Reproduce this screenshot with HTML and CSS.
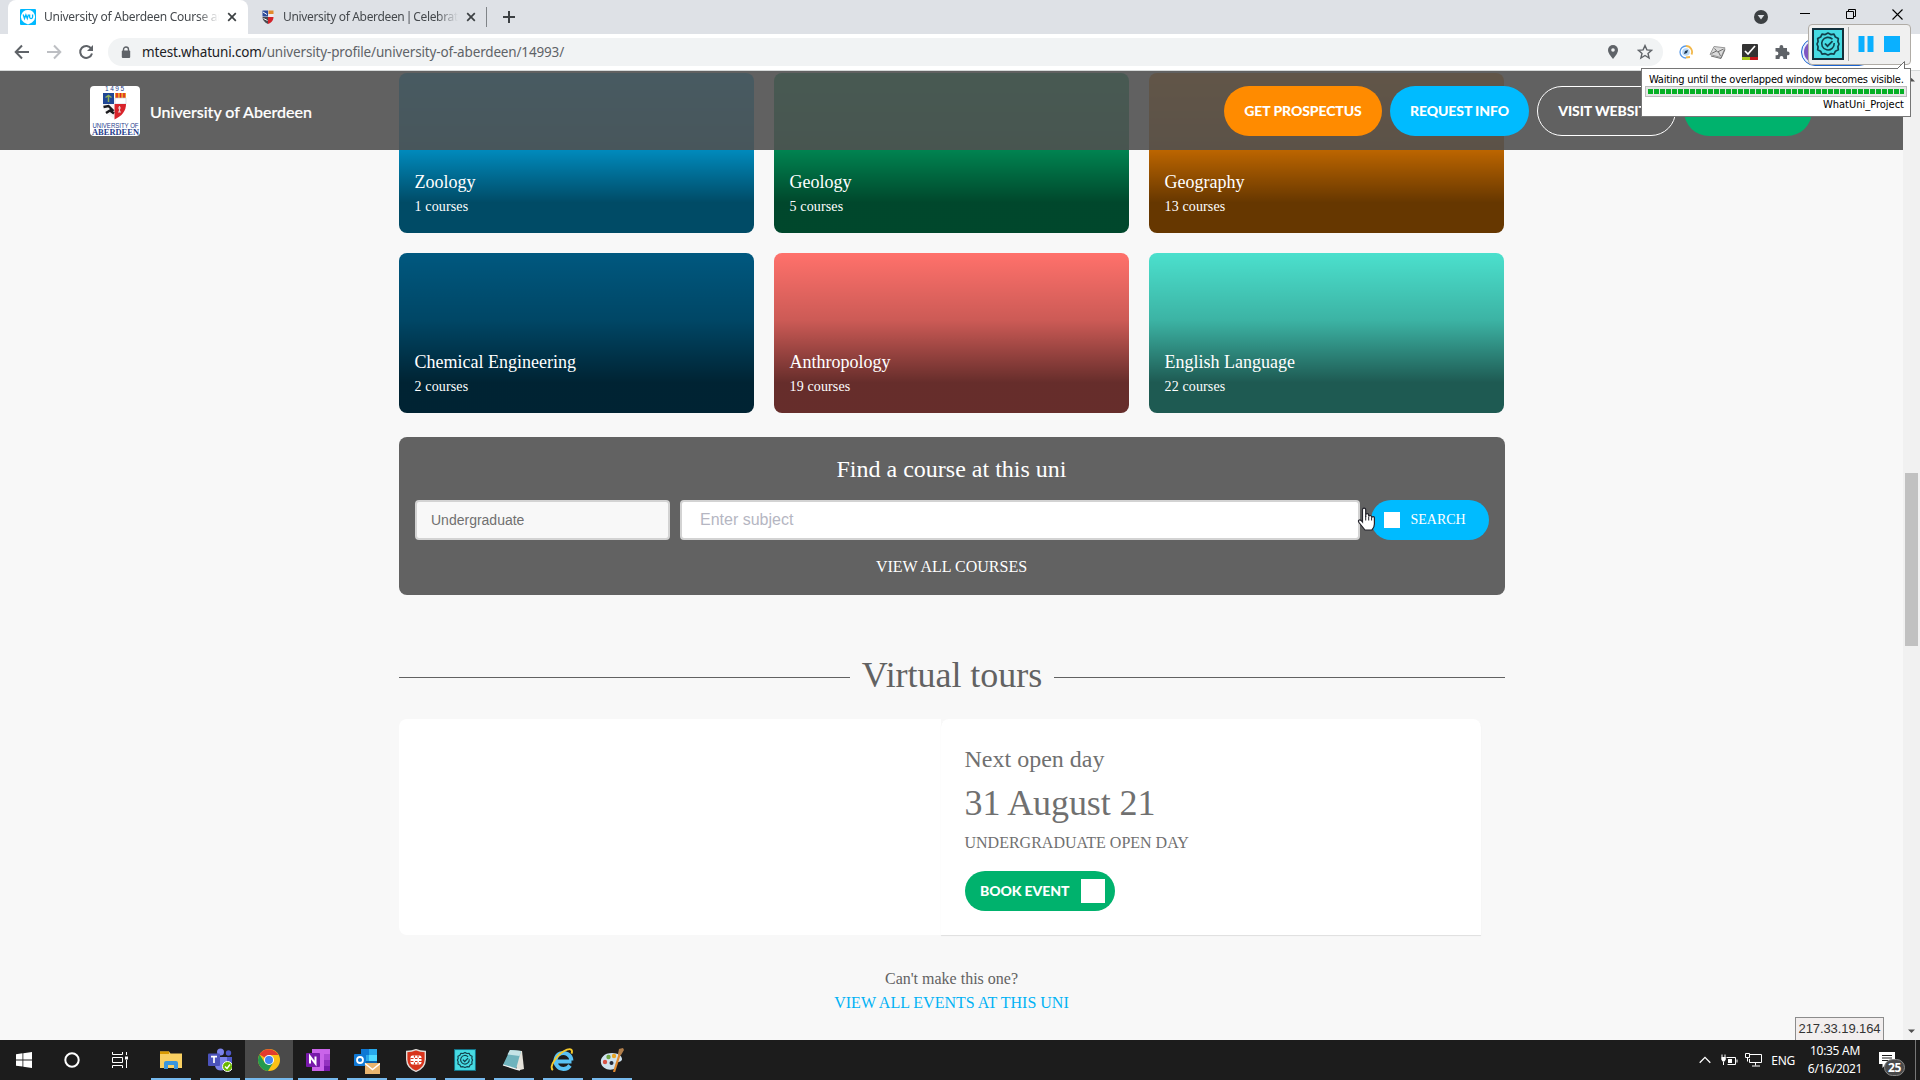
FILE: index.html
```html
<!DOCTYPE html>
<html lang="en">
<head>
<meta charset="utf-8">
<title>University of Aberdeen Course</title>
<link rel="stylesheet" href="styles.css">
</head>
<body>
<div class="desktop">
  <div class="tabstrip">
    <div class="tab tab-active">
      <svg class="favicon" width="16" height="16" viewBox="0 0 16 16"><rect width="16" height="16" rx="1" fill="#00b9ff"/><path d="M8 .9a6.9 6.9 0 0 1 4 12.600L8 15.500l-4-2A6.900 6.900 0 0 1 8 .9z" fill="#fff"/><path d="M3.200 5.500l1.300 4 1.400-3.600 1.400 3.600 1.200-4M9.600 5.500v2.600q0 1.500 1.500 1.500t1.500-1.500V5.500" fill="none" stroke="#00b9ff" stroke-width="1.300"/></svg>
      <span class="tab-title">University of Aberdeen Course and</span>
      <svg class="close" width="10" height="10" viewBox="0 0 10 10"><path d="M1.200 1.200l7.600 7.600M8.800 1.200l-7.600 7.600" stroke="#3c4043" stroke-width="1.700"/></svg>
    </div>
    <div class="tab">
      <svg class="favicon" width="16" height="16" viewBox="0 0 16 16"><path d="M2.500 1.500h5.500v6H2.500z" fill="#2c4a9a"/><path d="M8.500 1.500h5v3.500h-5z" fill="#e28a2b"/><path d="M8.500 5h5v3h-5z" fill="#f3eaea"/><path d="M2.500 8H8v7C4.500 13.500 2.500 11 2.500 8z" fill="#4a4a50"/><path d="M8 8h5.500C13.500 11.500 11 14 8 15z" fill="#d3232a"/><path d="M3 3l4 2.500M3.500 9.500l4 2" stroke="#fff" stroke-width="1"/></svg>
      <span class="tab-title tight">University of Aberdeen <span class="pipe">|</span> Celebrating</span>
      <svg class="close" width="10" height="10" viewBox="0 0 10 10"><path d="M1.200 1.200l7.600 7.600M8.800 1.200l-7.600 7.600" stroke="#3c4043" stroke-width="1.700"/></svg>
    </div>
    <span class="tab-sep"></span>
    <svg class="newtab" width="14" height="14" viewBox="0 0 14 14"><path d="M7 1v12M1 7h12" stroke="#3c4043" stroke-width="2"/></svg>
    <div class="window-buttons">
      <svg width="14" height="14" viewBox="0 0 14 14"><circle cx="7" cy="7" r="7" fill="#3c4043"/><path d="M3.700 5h6.600L7 9.600z" fill="#dee1e6"/></svg>
      <svg width="10" height="12" viewBox="0 0 10 12"><path d="M0 5.500h10" stroke="#000"/></svg>
      <svg width="10" height="10" viewBox="0 0 10 10"><path d="M.5 2.500h7v7h-7zM2.500 2.500v-2h7v7h-2" fill="none" stroke="#000"/></svg>
      <svg width="11" height="11" viewBox="0 0 11 11"><path d="M.5.5l10 10M10.500.5l-10 10" stroke="#000" stroke-width="1.100"/></svg>
    </div>
  </div>

  <div class="toolbar">
    <svg width="16" height="16" viewBox="0 0 16 16"><path d="M15 8H2M8 1.500L1.700 8 8 14.500" fill="none" stroke="#5f6368" stroke-width="2"/></svg>
    <svg width="16" height="16" viewBox="0 0 16 16"><path d="M1 8h13M8 1.500L14.300 8 8 14.500" fill="none" stroke="#bdbfc3" stroke-width="2"/></svg>
    <svg width="16" height="16" viewBox="0 0 16 16"><path d="M13.300 4.700A6 6 0 1 0 14 9.500" fill="none" stroke="#5f6368" stroke-width="2"/><path d="M15 1v6H9z" fill="#5f6368"/></svg>
    <div class="omnibox">
      <svg width="10" height="13" viewBox="0 0 10 13"><path d="M2.500 5V3.500a2.500 2.500 0 0 1 5 0V5" fill="none" stroke="#5f6368" stroke-width="1.400"/><rect x=".8" y="4.500" width="8.400" height="7.500" rx="1" fill="#5f6368"/></svg>
      <span class="url"><b>mtest.whatuni.com</b>/university-profile/university-of-aberdeen/14993/</span>
      <svg width="12" height="16" viewBox="0 0 12 16"><path d="M6 1a5 5 0 0 1 5 5c0 3.500-5 9-5 9S1 9.500 1 6a5 5 0 0 1 5-5z" fill="#5f6368"/><circle cx="6" cy="6" r="1.800" fill="#f1f3f4"/></svg>
      <svg width="16" height="16" viewBox="0 0 16 16"><path d="M8 1.600l1.900 4.300 4.700.4L11 9.400l1.100 4.600L8 11.500 3.900 14 5 9.400 1.400 6.300l4.700-.4z" fill="none" stroke="#5f6368" stroke-width="1.400"/></svg>
    </div>
    <div class="extensions">
      <svg width="14" height="14" viewBox="0 0 14 14"><path d="M7 1a6 6 0 0 1 5.500 8.500M11 12l-4 .5" fill="none" stroke="#f2b84b" stroke-width="1.800"/><path d="M7 1A6 6 0 0 0 7 13" fill="none" stroke="#5a9be8" stroke-width="1.300"/><circle cx="7" cy="7" r="3.800" fill="#b9d8f5"/><path d="M5 9l1-3 3-1-1 3z" fill="#1c3550"/></svg>
      <svg width="17" height="14" viewBox="0 0 17 14"><path d="M5 1.500l11 1.300-4 9.700L1 9.500z" fill="#dadada" stroke="#999"/><path d="M5.500 3.500l3 3.500 6-3M2.500 8.500l5-2.500M11.500 11L9.500 7M2 11l10 2.500 4-9" fill="none" stroke="#707070"/></svg>
      <svg width="16" height="16" viewBox="0 0 16 16"><rect width="16" height="16" rx="1" fill="#333"/><path d="M0 13h8v3H1a1 1 0 0 1-1-1z" fill="#a6c81c"/><path d="M8 13h8v2a1 1 0 0 1-1 1H8z" fill="#c4161c"/><path d="M3 7l3 3 7-8" fill="none" stroke="#fff" stroke-width="1.700"/></svg>
      <svg width="16" height="16" viewBox="0 0 16 16"><path d="M1.500 4h4V3a1.900 1.900 0 0 1 3.800 0v1h3.700v3.500h.7a1.900 1.900 0 0 1 0 3.800H13V15H9.400v-1a1.900 1.900 0 0 0-3.800 0v1h-4v-3.700h.9a1.900 1.900 0 0 0 0-3.800h-1z" fill="#5f6368"/></svg>
      <span class="profile"><i></i></span>
    </div>
  </div>

  <div class="viewport">
    <main class="page">
      <section class="cards">
        <article class="card c-sky"><h3>Zoology</h3><p>1 courses</p></article>
        <article class="card c-green"><h3>Geology</h3><p>5 courses</p></article>
        <article class="card c-orange"><h3>Geography</h3><p>13 courses</p></article>
        <article class="card c-navy"><h3>Chemical Engineering</h3><p>2 courses</p></article>
        <article class="card c-coral"><h3>Anthropology</h3><p>19 courses</p></article>
        <article class="card c-teal"><h3>English Language</h3><p>22 courses</p></article>
      </section>
      <section class="finder">
        <h2>Find a course at this uni</h2>
        <div class="finder-row">
          <div class="level">Undergraduate</div>
          <div class="subject">Enter subject</div>
          <div class="search"><i></i>SEARCH</div>
        </div>
        <a class="view-courses">VIEW ALL COURSES</a>
      </section>
      <div class="section-title"><span>Virtual tours</span></div>
      <section class="openday">
        <div class="media"></div>
        <div class="event">
          <p class="next">Next open day</p>
          <p class="date">31 August 21</p>
          <p class="kind">UNDERGRADUATE OPEN DAY</p>
          <div class="book"><span>BOOK EVENT</span><i></i></div>
        </div>
      </section>
      <div class="more"><p>Can't make this one?</p><a>VIEW ALL EVENTS AT THIS UNI</a></div>
    </main>
    <div class="scrollbar">
      <svg width="17" height="17" viewBox="0 0 17 17"><path d="M5 10.500h7L8.500 7z" fill="#505050"/></svg>
      <span class="thumb"></span>
      <svg width="17" height="17" viewBox="0 0 17 17"><path d="M5 6.500h7L8.500 10z" fill="#505050"/></svg>
    </div>
    <header class="unibar">
      <div class="crest">
        <svg width="50" height="50" viewBox="0 0 50 50">
          <text x="24.500" y="5" font-size="6.500" textLength="19" class="crest-text">1495</text>
          <g transform="translate(-1 0)"><path d="M14 7h11v11H14z" fill="#1f4795"/><path d="M26 7h11v5H26z" fill="#f0a127"/><path d="M28 7v5M31.500 7v5M35 7v5" stroke="#d8232a" stroke-width="1.500"/><path d="M26 12h11v6H26z" fill="#fff" stroke="#c5cad8" stroke-width=".6"/>
          <path d="M25.500 18H37c0 7-4 12-11.500 15.500z" fill="#d8232a"/><path d="M14 18h11v14.500C17 29 14 24 14 18z" fill="#f4f4f4"/><path d="M14.500 21l5-1 5 5M17 27l4-2.500 4 3" fill="none" stroke="#1a1a1e" stroke-width="2.400"/><path d="M19.500 9v7M16.500 11.500l3-2 3 2" fill="none" stroke="#8fb05a" stroke-width="1.500"/><path d="M30.500 20v6M29 26h3M29 22h3" stroke="#e8c9c9" stroke-width="1.200"/></g>
          <text x="25.500" y="41.500" font-size="7" textLength="46" lengthAdjust="spacingAndGlyphs" class="crest-text">UNIVERSITY OF</text>
          <text x="25.500" y="49" font-size="8.500" font-weight="700" textLength="47" lengthAdjust="spacingAndGlyphs" class="crest-text crest-serif">ABERDEEN</text>
        </svg>
      </div>
      <span class="uniname">University of Aberdeen</span>
      <div class="actions">
        <span class="btn b-orange">GET PROSPECTUS</span>
        <span class="btn b-blue">REQUEST INFO</span>
        <span class="btn b-line">VISIT WEBSITE</span>
        <span class="btn b-green"></span>
      </div>
    </header>
    <div class="ip">217.33.19.164</div>
  </div>

  <div class="taskbar">
    <div class="task"><svg width="16" height="16" viewBox="0 0 16 16"><path d="M0 2.200L6.500 1.300v6.200H0zM7.300 1.200L16 0v7.500H7.300zM0 8.400h6.500v6.200L0 13.700zM7.300 8.400H16V16l-8.700-1.200z" fill="#fff"/></svg></div>
    <div class="task"><svg width="16" height="16" viewBox="0 0 16 16"><circle cx="8" cy="8" r="6.700" fill="none" stroke="#fff" stroke-width="2"/></svg></div>
    <div class="task"><svg width="16" height="16" viewBox="0 0 16 16"><path d="M.5 0v2.500h10V0M.5 5.500h10v5H.5zM.5 16v-2.500h10V16M14.500 0v3M14.500 8v8" fill="none" stroke="#fff"/><path d="M13 4.500h3v3h-3z" fill="#fff"/></svg></div>
    <div class="task open"><svg width="22" height="20" viewBox="0 0 22 20"><path d="M0 1.500h9l1.500 2H22V18H0z" fill="#f9d062"/><path d="M0 1.500h9v2.500H0z" fill="#d99a00"/><path d="M4 19v-6q0-2 2-2h10q2 0 2 2v6h-4v-4H8v4z" fill="#3a96dd"/></svg></div>
    <div class="task open"><svg width="24" height="24" viewBox="0 0 24 24"><circle cx="12.500" cy="4" r="3.500" fill="#7b83eb"/><circle cx="20.500" cy="5" r="2.700" fill="#5059c9"/><path d="M17 9h7v7q-1 3.500-5 3z" fill="#5059c9"/><path d="M7 9h12v8q-1 5.500-6 5.500T7 18z" fill="#7b83eb"/><rect y="5.500" width="12" height="12.500" rx="1" fill="#4b53bc"/><path d="M3 8.700h6M6 8.700V15" stroke="#fff" stroke-width="1.700"/><circle cx="19.500" cy="18.500" r="5" fill="#6bb700" stroke="#fff"/><path d="M17 18.500l2 2 3-4" fill="none" stroke="#fff" stroke-width="1.400"/></svg></div>
    <div class="task open current"><svg width="22" height="22" viewBox="0 0 22 22"><circle cx="11" cy="11" r="11" fill="#fbc116"/><path d="M11 11L1.500 5.500A11 11 0 0 1 20.500 6H11z" fill="#e33b2e"/><path d="M1.500 5.500A11 11 0 0 0 10 22l5.300-8.500L6.700 13.500z" fill="#239a4e"/><circle cx="11" cy="11" r="5" fill="#fff"/><circle cx="11" cy="11" r="4" fill="#4285f4"/></svg></div>
    <div class="task open"><svg width="24" height="22" viewBox="0 0 24 22"><path d="M6 0h18v22H6z" fill="#ca64ea"/><path d="M18 0h6v6h-6z" fill="#ca64ea"/><path d="M18 5h6v6h-6z" fill="#ae4bd5"/><path d="M18 11h6v5.500h-6z" fill="#9332bf"/><path d="M18 16.500h6V22h-6z" fill="#7719aa"/><rect y="4" width="14" height="14" rx="1" fill="#7719aa"/><path d="M4 14.500v-7l5.500 7v-7" fill="none" stroke="#fff" stroke-width="2"/></svg></div>
    <div class="task open"><svg class="low" width="26" height="25" viewBox="0 0 26 25"><path d="M7 0h16v17H7z" fill="#0a64ad"/><path d="M7 0h8v6H7z" fill="#0f78d4"/><path d="M15 0h8v6h-8zM7 6h8v6H7z" fill="#28a8ea"/><path d="M15 6h8v6h-8z" fill="#50d9ff"/><rect y="5" width="12" height="12" rx="1" fill="#0f78d4"/><circle cx="6" cy="11" r="3" fill="none" stroke="#fff" stroke-width="1.800"/><path d="M11 14h15v11H11z" fill="#eab56f"/><path d="M11 14.500l7.500 6 7.500-6" fill="none" stroke="#fff" stroke-width="1.500"/></svg></div>
    <div class="task open"><svg width="20" height="23" viewBox="0 0 20 23"><path d="M.7 2.500Q6 2.500 10 .7q4 1.800 9.300 1.800v8Q19 19 10 22.300 1 19 .7 10.500z" fill="#d8341c" stroke="#e0dcd8" stroke-width="1.400"/><rect x="4.500" y="6.500" width="11" height="9" rx="2" fill="#fff"/><path d="M4.500 9.500h3m1.500 0h2.500m1.500 0h3M4.500 12.500h3m1.500 0h2.500m1.500 0h3M8.500 6.500v2M12 6.500v2M8.500 13.500v2M12 13.500v2" stroke="#d8341c" stroke-width="1.200"/></svg></div>
    <div class="task open"><svg width="22" height="22" viewBox="0 0 32 32"><rect x=".8" y=".8" width="30.400" height="30.400" fill="#47dbe3" stroke="#13758a" stroke-width="1.500"/><use href="#gear"/></svg></div>
    <div class="task open"><svg class="left" width="23" height="22" viewBox="0 0 23 22"><path d="M8 1l12 1 2 18-4 1-3-1z" fill="#e5e2da"/><path d="M8 1l11 1-5 18L1 16z" fill="#6fb3bd"/><path d="M8 1l11 1-1.500 5L5.500 5.500z" fill="#c4e3e6"/><path d="M1 16l13 4 4 1" fill="none" stroke="#f3f3f3" stroke-width="1.300"/></svg></div>
    <div class="task open"><svg class="left" width="24" height="24" viewBox="0 0 24 24"><path d="M6 13.500h15.500M20 17.500a8 8 0 1 1 1.400-5" fill="none" stroke="#59c2f4" stroke-width="4"/><path d="M3 22C-2 19 8 5 17 1.700c4-1.500 6 .3 4.500 4" fill="none" stroke="#f5c92c" stroke-width="1.900"/></svg></div>
    <div class="task open"><svg width="24" height="24" viewBox="0 0 24 24"><path d="M12 5C4 5 0 10 1 15s7 8 13 6c3-1 1-4 3-6s5-1 5-4-4-6-10-6z" fill="#cfe2ee"/><circle cx="5" cy="14" r="2.200" fill="#d85246"/><circle cx="8.500" cy="9" r="2.200" fill="#6ea746"/><circle cx="14" cy="8" r="2.200" fill="#e7a628"/><circle cx="11.500" cy="15" r="2" fill="#252b38"/><path d="M20 5l-6 19" stroke="#e08a2f" stroke-width="2.200"/><path d="M18 6l1-5 4-1 1 2-3 5z" fill="#b07e4b"/></svg></div>
    <div class="tray">
      <svg class="t-up" width="12" height="8" viewBox="0 0 12 8"><path d="M.7 6.700L6 1.400l5.300 5.300" fill="none" stroke="#fff" stroke-width="1.300"/></svg>
      <svg class="t-bat" width="17" height="12" viewBox="0 0 17 12"><path d="M5.500 3.500h9v7h-8M16 5.500v3M2.500 11V7.500M1 .5v2.500M4 .5v2.500" fill="none" stroke="#fff"/><path d="M.3 3h4.500v2.500L3.500 7.500h-2L.3 5.500zM7 5h4v4H7z" fill="#fff"/></svg>
      <svg class="t-net" width="17" height="14" viewBox="0 0 17 14"><path d="M5 1.500h11.500v8h-12V6M10.500 9.500v3M7 13h8" fill="none" stroke="#fff"/><path d="M.5.500h4v4h-4zM2.500 4.500v4" fill="none" stroke="#fff"/></svg>
      <span class="lang">ENG</span>
      <div class="clock"><span>10:35 AM</span><span>6/16/2021</span></div>
      <div class="notify">
        <svg width="16" height="16" viewBox="0 0 16 16"><path d="M0 0h16v12H7l-3.500 4v-4H0z" fill="#fff"/><path d="M3 3.500h10M3 6h10M3 8.500h6" stroke="#1c1c1c"/></svg>
        <span class="count">25</span>
      </div>
      <span class="peek"></span>
    </div>
  </div>

  <div class="runner">
    <svg width="32" height="32" viewBox="0 0 32 32"><rect x="1" y="1" width="30" height="30" fill="#47dbe3" stroke="#12303c" stroke-width="2"/>
      <g id="gear" fill="none" stroke="#12404c"><path d="M16 5l2.800 1.600 3.200-.4 1.400 2.900 2.900 1.500-.4 3.100L27 16l-1.100 2.700.4 3.100-2.900 1.400-1.400 2.900-3.200-.4L16 27l-2.800-1.300-3.200.4-1.400-2.900-2.900-1.400.4-3.100L5 16l1.100-2.300-.4-3.100 2.900-1.500L10 6.200l3.200.4z" stroke-width="1.700" stroke-linejoin="round"/><path d="M20.500 11.300A6.300 6.300 0 1 0 22.200 15" stroke-width="1.600"/><path d="M13 15.500l2.500 2.700 5-5" stroke-width="1.800"/></g>
    </svg>
    <i class="rule"></i>
    <svg class="pause" width="16" height="16" viewBox="0 0 16 16"><path d="M.5 0h6v16h-6zM9.500 0h6v16h-6z" fill="#0ab0ff"/></svg>
    <svg width="16" height="16" viewBox="0 0 16 16"><path d="M0 0h16v16H0z" fill="#0ab0ff"/></svg>
  </div>
  <div class="balloon">
    <svg class="tip" width="9" height="9" viewBox="0 0 9 9"><path d="M0 9V8L7.500.5V9z" fill="#fff"/><path d="M0 8L7.500.5V8" fill="none" stroke="#6e6e6e"/></svg>
    <p>Waiting until the overlapped window becomes visible.</p>
    <div class="bar"><i></i></div>
    <p class="project">WhatUni_Project</p>
  </div>
  <svg class="cursor" width="19" height="25" viewBox="0 0 19 25"><path d="M5.500 15V2.700a1.600 1.600 0 0 1 3.200 0V10V8a1.500 1.500 0 0 1 3 .2V9.500a1.500 1.500 0 0 1 2.900.3v1a1.400 1.400 0 0 1 2.800.5V17q0 3.500-2.500 6H8L2 15.500q-1.200-2 .3-2.500 1.500-.3 3.200 2z" fill="#fff" stroke="#23232b" stroke-width="1.200"/><path d="M8.700 9v4.500M11.700 10v3.500M14.600 11v2.500" stroke="#23232b"/></svg>
</div>
</body>
</html>
```
FILE: styles.css
```css
* { box-sizing: border-box; }
body { margin: 0; overflow: hidden; }
h2, h3, p { margin: 0; font-weight: 400; }
svg { display: block; flex: none; }
.desktop { position: relative; width: 1920px; height: 1080px; display: flex; flex-direction: column; overflow: hidden; font-family: "Liberation Serif", "Times New Roman", serif; }

.tabstrip { height: 34px; flex: none; background: #dee1e6; display: flex; align-items: center; padding-left: 8px; font-family: "Noto Sans", sans-serif; }
.tab { width: 240px; height: 34px; display: flex; align-items: center; padding: 0 11px 0 12px; color: #45494d; }
.tab + .tab { padding-right: 12px; }
.tab-active { background: #fff; border-radius: 8px 8px 0 0; }
.tab-title { flex: 1; margin: 0 8px; padding-bottom: 1px; font-size: 12px; letter-spacing: -.27px; white-space: nowrap; overflow: hidden; -webkit-mask-image: linear-gradient(90deg, #000 88%, transparent); mask-image: linear-gradient(90deg, #000 88%, transparent); }
.tight { letter-spacing: -.34px; margin-left: 7px; }
.pipe { margin: 0 -1.500px; }
.tab-sep { width: 1px; height: 20px; background: #808488; margin-left: -2px; }
.newtab { margin-left: 15px; }
.window-buttons { margin-left: auto; display: flex; align-items: center; gap: 36px; padding: 0 17px 6px 0; }
.window-buttons svg:first-child { position: relative; top: 3px; margin-right: -4px; }

.toolbar { height: 37px; flex: none; background: #fff; border-bottom: 1px solid #d6d9d9; display: flex; align-items: center; padding: 0 14px; gap: 16px; }
.toolbar .omnibox { flex: 1; height: 28px; border-radius: 14px; background: #f1f3f4; display: flex; align-items: center; padding: 0 10px 0 13px; margin-left: -2px; gap: 18px; }
.url { flex: 1; font: 13.500px "Noto Sans", sans-serif; letter-spacing: -.16px; color: #5f6368; margin-left: -7px; }
.url b { font-weight: 400; color: #202124; }
.extensions { width: 227px; display: flex; align-items: center; gap: 16px; margin-left: 0; }
.profile { width: 72px; height: 28px; border: 1px solid #1a63d0; border-radius: 14px; background: #e8f0fe; padding: 2px; margin-left: -5px; }
.profile i { display: block; width: 22px; height: 22px; border-radius: 50%; background: #7e57c2; }

.viewport { position: relative; flex: 1; display: flex; background: #f8f8f8; overflow: hidden; }
.page { flex: 1; padding: 2px 0 0 399px; }
.cards { display: grid; grid-template-columns: repeat(3, 355px); gap: 20px; }
.card { height: 160px; border-radius: 8px; color: #fff; display: flex; flex-direction: column; justify-content: flex-end; padding: 0 15.500px 16px; background-image: linear-gradient(rgba(0,0,0,0), rgba(0,0,0,.2) 42%, rgba(0,0,0,.6) 81%); }
.card h3 { font-size: 18px; line-height: 27px; padding-bottom: 1px; }
.card p { font-size: 14px; letter-spacing: .14px; line-height: 20px; }
.c-sky { background-color: #0bf; }
.c-green { background-color: #00b26d; }
.c-orange { background-color: #ff8900; }
.c-navy { background-color: #00587f; }
.c-coral { background-color: #ff716b; }
.c-teal { background-color: #4be0cd; }

.finder { width: 1106px; height: 158px; margin-top: 24px; background: #626262; border-radius: 8px; padding: 16px; color: #fff; text-align: center; }
.finder h2 { font-size: 24px; line-height: 32px; margin-right: 1px; }
.finder-row { display: flex; height: 40px; margin-top: 15px; text-align: left; }
.level, .subject { border: 2px solid #d3d3d3; border-radius: 4px; font-family: "Liberation Sans", Arial, sans-serif; line-height: 36px; }
.level { width: 255px; background: #f8f8f8; color: #707070; font-size: 14px; padding-left: 14px; }
.subject { width: 680px; margin-left: 10px; background: #fff; color: #b5b6c2; font-size: 16px; padding-left: 18px; }
.search { width: 118px; margin-left: auto; background: #0bf; border-radius: 20px; display: flex; align-items: center; font-size: 14px; padding-left: 13px; gap: 10.500px; }
.search i { width: 16px; height: 16px; background: #fff; }
.view-courses { display: block; font-size: 16px; line-height: 20px; margin: 17px 1px 0 0; }

.section-title { width: 1106px; display: flex; align-items: center; gap: 12px; margin-top: 60px; height: 40px; color: #626262; font-size: 36px; }
.section-title span { line-height: 40px; letter-spacing: -.04px; }
.section-title::before, .section-title::after { content: ""; flex: 1; height: 1px; background: #626262; margin-top: 5px; }

.openday { display: flex; height: 216px; margin-top: 24px; }
.media { width: 542px; background: #fff; border-radius: 8px 0 0 8px; }
.event { width: 540px; background: #fff; border-radius: 8px 8px 0 0; box-shadow: 0 1px 1px rgba(0,0,0,.1); padding: 24px 23.500px; color: #707070; }
.next { font-size: 24px; line-height: 32px; }
.date { font-size: 36px; line-height: 44px; margin-top: 6px; letter-spacing: -.1px; }
.kind { font-size: 16px; line-height: 24px; margin-top: 6px; }
.book { width: 150px; height: 40px; margin: 16px 0 0 .5px; border-radius: 20px; background: #00b26d; color: #fff; font: 900 14px Lato, sans-serif; letter-spacing: -.1px; display: flex; align-items: center; justify-content: space-between; padding: 0 10px 0 15px; }
.book span { padding-bottom: 1px; }
.book i { width: 24px; height: 24px; background: #fff; }
.more { width: 1105px; margin-top: 32px; text-align: center; font-size: 16px; line-height: 24px; color: #626262; }
.more a { color: #00b2f5; }

.scrollbar { width: 17px; background: #f1f1f1; display: flex; flex-direction: column; align-items: center; }
.scrollbar .thumb { width: 13px; height: 173px; background: #c1c1c1; margin: 385px 0 auto; }

.unibar { position: absolute; left: 0; top: 0; width: 1903px; height: 79px; background: rgba(80,80,80,.9); display: flex; align-items: center; padding: 0 91px 0 90px; }
.crest { width: 50px; height: 50px; background: #fff; border-radius: 4px; overflow: hidden; }
.crest-text { fill: #27408c; text-anchor: middle; font-family: "Liberation Sans", sans-serif; }
.crest-serif { font-family: "Liberation Serif", serif; }
.uniname { margin-left: 10px; padding-top: 2px; color: #fff; font: 500 16px Lato, sans-serif; -webkit-text-stroke: .2px #fff; }
.actions { margin-left: auto; display: flex; color: #fff; font: 900 14px Lato, sans-serif; letter-spacing: -.1px; }
.btn { height: 50px; line-height: 50px; border-radius: 25px; text-align: center; }
.b-orange { width: 158px; background: #ff8b00; }
.b-blue { width: 139px; background: #0bf; margin-left: 8px; }
.b-line { width: 139px; border: 1px solid #fff; line-height: 48px; margin-left: 8px; }
.b-green { width: 128px; background: #00b26d; margin-left: 8px; }

.ip { position: absolute; left: 1795px; bottom: 0; width: 89px; height: 23px; border: 1px solid #8c8c8c; border-bottom: 0; background: #f2eeee; color: #333; font: 13px/22px "Liberation Sans", sans-serif; letter-spacing: -.1px; text-align: center; }

.taskbar { height: 40px; flex: none; background: #1c1c1c; display: flex; }
.task { width: 48px; margin-right: 1px; display: flex; align-items: center; justify-content: center; }
.task:nth-child(-n+3) { margin-right: 0; }
.task.open { background: linear-gradient(#76b9ed, #76b9ed) center bottom / 40px 2px no-repeat; }
.task:nth-child(3) { margin-right: 3px; }
.task.current { background: linear-gradient(#76b9ed, #76b9ed) center bottom / 48px 2px no-repeat #4a4a4a; }
.task .low { margin-top: 2px; }
.task .left { margin-right: 2px; }
.tray { margin-left: auto; display: flex; align-items: center; color: #fff; font: 12px "Noto Sans", sans-serif; height: 40px; }
.t-bat { margin-left: 10px; }
.t-net { margin-left: 7px; }
.lang { margin-left: 9px; letter-spacing: -.3px; }
.clock { display: flex; flex-direction: column; align-items: center; line-height: 18px; width: 56px; margin-left: 12px; padding-bottom: 1px; letter-spacing: -.3px; white-space: nowrap; }
.notify { position: relative; width: 36px; margin-left: 16px; }
.count { position: absolute; left: 5px; top: 7px; width: 21px; height: 17px; border-radius: 9px; border: 1px solid #888; background: #4a4a4a; font: 700 12px/15px "Noto Sans", sans-serif; letter-spacing: -.4px; text-align: center; }
.peek { width: 5px; height: 40px; border-left: 1px solid #777; }

.runner { position: absolute; left: 1808px; top: 24px; width: 103px; height: 41px; background: #f0f0f0; border: 1px solid #b0aca6; border-radius: 4px; display: flex; align-items: center; padding: 0 10px 1px 3px; }
.rule { width: 1px; height: 34px; background: #aaa; margin-left: 4px; }
.pause { margin: 0 10px 0 9px; }
.balloon { position: absolute; left: 1641px; top: 68px; width: 270px; height: 49px; background: #fff; border: 1px solid #767676; padding: 4px 3px 0; color: #000; font: 11px/14px "DejaVu Sans Condensed", "DejaVu Sans", sans-serif; }
.balloon p { white-space: nowrap; letter-spacing: -.24px; padding-left: 4px; }
.balloon .bar { height: 11px; margin-top: -1px; border: 1px solid #bcbcbc; background: #e6e6e6; padding: 2px; }
.bar i { display: block; height: 5px; background: repeating-linear-gradient(90deg, #06b025 0 5px, #e6e6e6 5px 6px); }
.balloon .project { text-align: right; letter-spacing: 0; padding: 1px 3px 0 0; }
.tip { position: absolute; right: 4px; top: -8px; }
.cursor { position: absolute; left: 1357px; top: 507px; }
```
